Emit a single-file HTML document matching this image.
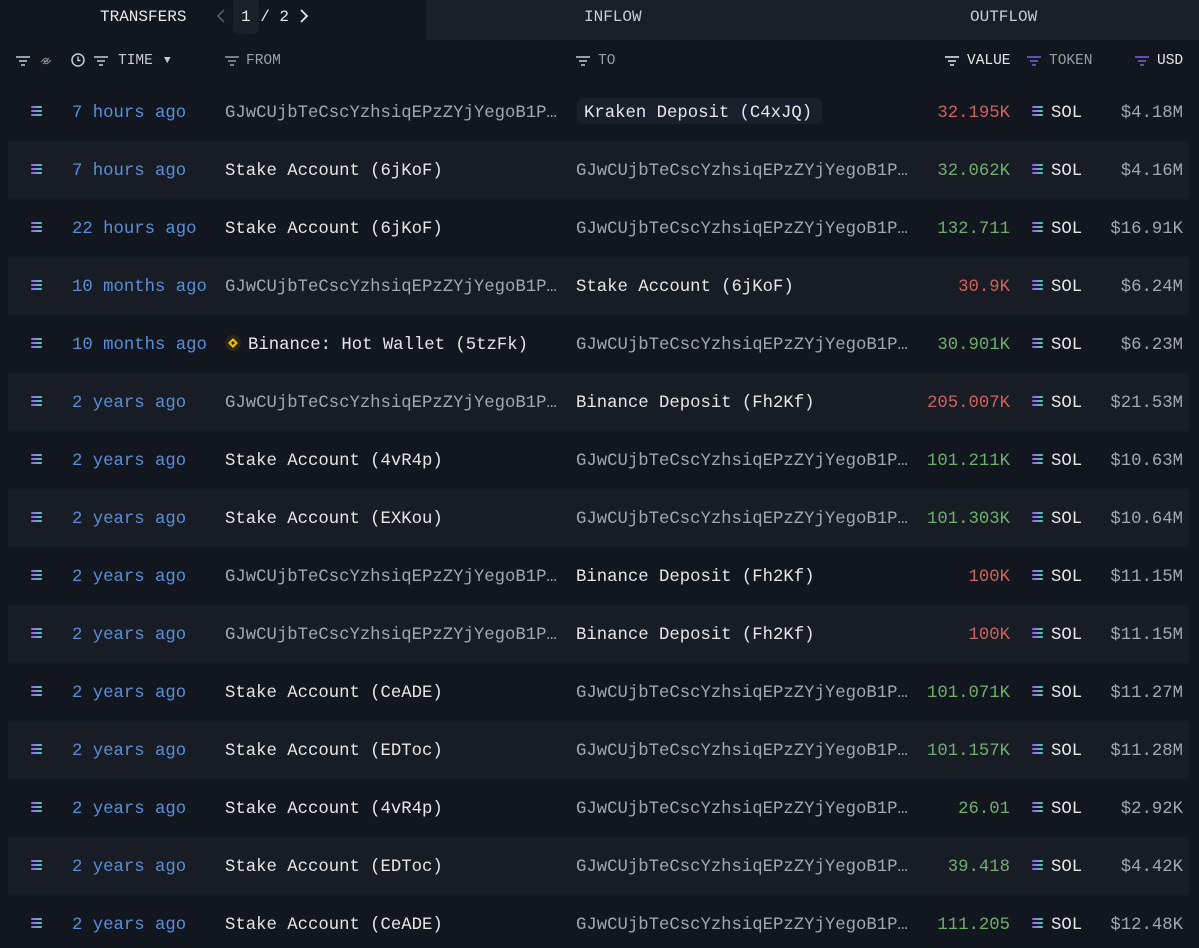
<!DOCTYPE html>
<html><head><meta charset="utf-8"><style>
*{margin:0;padding:0;box-sizing:border-box}
body{width:1199px;height:948px;background:#12161f;font-family:"Liberation Mono",monospace;font-size:17.3px;color:#e4e6ea;position:relative;overflow:hidden}
.a{position:absolute;white-space:nowrap;line-height:20px}
.tabbar{position:absolute;left:426px;top:0;width:773px;height:40px;background:#1a1e27}
.row{position:absolute;left:8px;width:1182px;height:58px}
.sh{background:#181c25}
.h{font-size:14.5px;color:#c9ccd2}
.sol{position:absolute;width:11px;height:10px}
.sol i{display:block;height:2px;margin-bottom:2px;border-radius:1px;background:linear-gradient(90deg,#9b5cf0,#4fd1b8)}
.t{color:#5a8fd8}
.g{color:#a3a7ae}
.r{color:#d3605a}
.gr{color:#6fae6e}
</style></head><body>
<div class="tabbar"></div>
<div class="a h" style="left:100px;top:7px;font-size:16px;color:#e6e8ec">TRANSFERS</div>
<svg class="a" style="left:215px;top:8px" width="12" height="16"><path d="M9 2L3 8l6 6" stroke="#555a63" stroke-width="1.6" fill="none"/></svg>
<div style="position:absolute;left:233px;top:0;width:26px;height:34px;background:#1c2029;border-radius:0 0 5px 5px"></div>
<div class="a" style="left:241px;top:7px;font-size:16px;color:#e6e8ec">1 / 2</div>
<svg class="a" style="left:298px;top:8px" width="12" height="16"><path d="M3 2l6 6-6 6" stroke="#e6e8ec" stroke-width="1.8" fill="none"/></svg>
<div class="a h" style="left:584px;top:7px;font-size:16px;color:#c9ccd2">INFLOW</div>
<div class="a h" style="left:970px;top:7px;font-size:16px;color:#c9ccd2">OUTFLOW</div>

<svg class="a" style="left:15px;top:54px" width="40" height="14"><g stroke="#c9ccd2" stroke-width="1.6"><path d="M1 3h14M4 7h8M6 11h4"/></g><path d="M28 10l6-6M26 8l3-3a2 2 0 013 3M36 6l-3 3a2 2 0 01-3-3" stroke="#888" fill="none" stroke-width="1.2"/></svg>
<svg class="a" style="left:71px;top:53px" width="44" height="15"><circle cx="7" cy="7" r="6" stroke="#c9ccd2" fill="none" stroke-width="1.5"/><path d="M7 3.5v4h2.5" stroke="#c9ccd2" fill="none" stroke-width="1.4"/><g stroke="#c9ccd2" stroke-width="1.6"><path d="M23 4h14M26 8h8M28 12h4"/></g></svg>
<div class="a h" style="left:118px;top:51px">TIME</div>
<div class="a" style="left:164px;top:51px;font-size:11px;color:#c9ccd2">▼</div>
<svg class="a" style="left:224px;top:54px" width="16" height="14"><g stroke="#9a9ea6" stroke-width="1.6"><path d="M1 3h14M4 7h8M6 11h4"/></g></svg>
<div class="a h" style="left:246px;top:51px;color:#9a9ea6">FROM</div>
<svg class="a" style="left:575px;top:54px" width="16" height="14"><g stroke="#c9ccd2" stroke-width="1.6"><path d="M1 3h14M4 7h8M6 11h4"/></g></svg>
<div class="a h" style="left:598px;top:51px;color:#9a9ea6">TO</div>
<svg class="a" style="left:944px;top:54px" width="16" height="14"><g stroke="#e6e8ec" stroke-width="1.6"><path d="M1 3h14M4 7h8M6 11h4"/></g></svg>
<div class="a h" style="left:967px;top:51px;color:#e6e8ec">VALUE</div>
<svg class="a" style="left:1026px;top:54px" width="16" height="14"><g stroke="#7b63d8" stroke-width="1.6"><path d="M1 3h14M4 7h8M6 11h4"/></g></svg>
<div class="a h" style="left:1049px;top:51px;color:#9a9ea6">TOKEN</div>
<svg class="a" style="left:1134px;top:54px" width="16" height="14"><g stroke="#7b63d8" stroke-width="1.6"><path d="M1 3h14M4 7h8M6 11h4"/></g></svg>
<div class="a h" style="left:1157px;top:51px;color:#e6e8ec">USD</div>

<div class="a" style="left:420px;top:515px;font-size:48px;font-weight:bold;color:#1a1e27;font-family:'Liberation Sans',sans-serif;letter-spacing:4px">ARKHAM</div>

<div id="rows"></div>
<script>
var A="GJwCUjbTeCscYzhsiqEPzZYjYegoB1P…";
var d=[
["7 hours ago",A,1,"Kraken Deposit (C4xJQ)",0,"32.195K","r","$4.18M"],
["7 hours ago","Stake Account (6jKoF)",0,A,1,"32.062K","gr","$4.16M"],
["22 hours ago","Stake Account (6jKoF)",0,A,1,"132.711","gr","$16.91K"],
["10 months ago",A,1,"Stake Account (6jKoF)",0,"30.9K","r","$6.24M"],
["10 months ago","Binance: Hot Wallet (5tzFk)",2,A,1,"30.901K","gr","$6.23M"],
["2 years ago",A,1,"Binance Deposit (Fh2Kf)",0,"205.007K","r","$21.53M"],
["2 years ago","Stake Account (4vR4p)",0,A,1,"101.211K","gr","$10.63M"],
["2 years ago","Stake Account (EXKou)",0,A,1,"101.303K","gr","$10.64M"],
["2 years ago",A,1,"Binance Deposit (Fh2Kf)",0,"100K","r","$11.15M"],
["2 years ago",A,1,"Binance Deposit (Fh2Kf)",0,"100K","r","$11.15M"],
["2 years ago","Stake Account (CeADE)",0,A,1,"101.071K","gr","$11.27M"],
["2 years ago","Stake Account (EDToc)",0,A,1,"101.157K","gr","$11.28M"],
["2 years ago","Stake Account (4vR4p)",0,A,1,"26.01","gr","$2.92K"],
["2 years ago","Stake Account (EDToc)",0,A,1,"39.418","gr","$4.42K"],
["2 years ago","Stake Account (CeADE)",0,A,1,"111.205","gr","$12.48K"]];
var s="",sol='<i></i><i></i><i style="margin:0"></i>';
d.forEach(function(r,i){var top=83+i*58,c=top+29,ty=c-8;
if(i%2)s+='<div class="row sh" style="top:'+top+'px"></div>';
s+='<div class="sol" style="left:31px;top:'+(c-6)+'px">'+sol+'</div>';
s+='<div class="a t" style="left:72px;top:'+ty+'px">'+r[0]+'</div>';
var fx=225;
if(r[2]==2){s+='<svg class="a" style="left:225px;top:'+(c-9)+'px" width="16" height="16"><circle cx="8" cy="8" r="8" fill="#2a2618"/><path d="M8 3l5 5-5 5-5-5z M8 6l2 2-2 2-2-2z" fill="#f0b90b" fill-rule="evenodd"/></svg>';fx=248;}
s+='<div class="a '+(r[2]==1?'g':'')+'" style="left:'+fx+'px;top:'+ty+'px">'+r[1]+'</div>';
if(i==0)s+='<div style="position:absolute;left:577px;top:'+(c-14)+'px;width:245px;height:26px;background:#1a1f2b;border-radius:6px"></div>';
s+='<div class="a '+(r[4]==1?'g':'')+'" style="left:'+(i==0?584:576)+'px;top:'+ty+'px">'+r[3]+'</div>';
s+='<div class="a '+r[6]+'" style="right:189px;top:'+ty+'px">'+r[5]+'</div>';
s+='<div class="sol" style="left:1032px;top:'+(c-6)+'px">'+sol+'</div>';
s+='<div class="a" style="left:1051px;top:'+ty+'px">SOL</div>';
s+='<div class="a g" style="right:16px;top:'+ty+'px">'+r[7]+'</div>';
});
document.getElementById("rows").innerHTML=s;
</script>
</body></html>
